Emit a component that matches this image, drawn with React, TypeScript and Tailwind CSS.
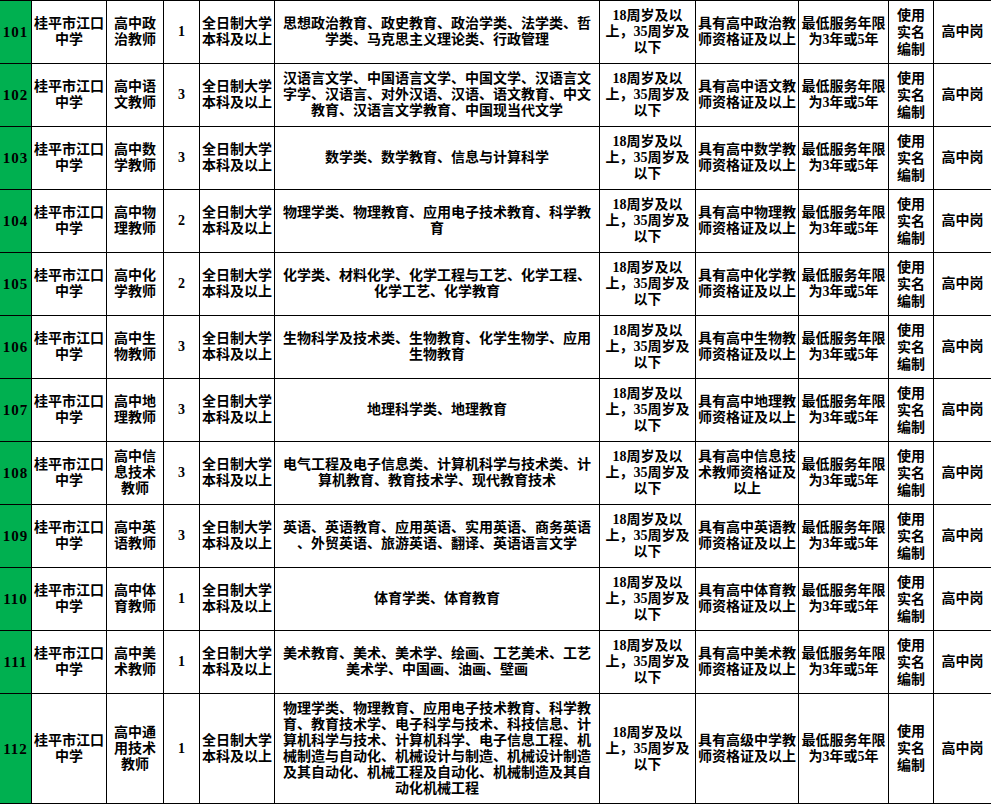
const cols = "grid-cols-[32px_75px_57px_36px_75px_325px_96px_103px_90px_45px_57px]"

type Row = {
  no: string
  post: string
  count: string
  major: string
  cert: string
}

const rows: Row[] = [
  { no: "101", post: "高中政/治教师", count: "1", major: "思想政治教育、政史教育、政治学类、法学类、哲/学类、马克思主义理论类、行政管理", cert: "具有高中政治教/师资格证及以上" },
  { no: "102", post: "高中语/文教师", count: "3", major: "汉语言文学、中国语言文学、中国文学、汉语言文/字学、汉语言、对外汉语、汉语、语文教育、中文/教育、汉语言文学教育、中国现当代文学", cert: "具有高中语文教/师资格证及以上" },
  { no: "103", post: "高中数/学教师", count: "3", major: "数学类、数学教育、信息与计算科学", cert: "具有高中数学教/师资格证及以上" },
  { no: "104", post: "高中物/理教师", count: "2", major: "物理学类、物理教育、应用电子技术教育、科学教/育", cert: "具有高中物理教/师资格证及以上" },
  { no: "105", post: "高中化/学教师", count: "2", major: "化学类、材料化学、化学工程与工艺、化学工程、/化学工艺、化学教育", cert: "具有高中化学教/师资格证及以上" },
  { no: "106", post: "高中生/物教师", count: "3", major: "生物科学及技术类、生物教育、化学生物学、应用/生物教育", cert: "具有高中生物教/师资格证及以上" },
  { no: "107", post: "高中地/理教师", count: "3", major: "地理科学类、地理教育", cert: "具有高中地理教/师资格证及以上" },
  { no: "108", post: "高中信/息技术/教师", count: "3", major: "电气工程及电子信息类、计算机科学与技术类、计/算机教育、教育技术学、现代教育技术", cert: "具有高中信息技/术教师资格证及/以上" },
  { no: "109", post: "高中英/语教师", count: "3", major: "英语、英语教育、应用英语、实用英语、商务英语/、外贸英语、旅游英语、翻译、英语语言文学", cert: "具有高中英语教/师资格证及以上" },
  { no: "110", post: "高中体/育教师", count: "1", major: "体育学类、体育教育", cert: "具有高中体育教/师资格证及以上" },
  { no: "111", post: "高中美/术教师", count: "1", major: "美术教育、美术、美术学、绘画、工艺美术、工艺/美术学、中国画、油画、壁画", cert: "具有高中美术教/师资格证及以上" },
  { no: "112", post: "高中通/用技术/教师", count: "1", major: "物理学类、物理教育、应用电子技术教育、科学教/育、教育技术学、电子科学与技术、科技信息、计/算机科学与技术、计算机科学、电子信息工程、机/械制造与自动化、机械设计与制造、机械设计制造/及其自动化、机械工程及自动化、机械制造及其自/动化机械工程", cert: "具有高级中学教/师资格证及以上" },
]

function Cell({ text, className = "" }: { text: string; className?: string }) {
  return (
    <div className={`flex flex-col items-center justify-center border-r border-b border-black text-center ${className}`}>
      {text.split("/").map((line, i) => (
        <span key={i} className="whitespace-nowrap">
          {line}
        </span>
      ))}
    </div>
  )
}

export default function App() {
  return (
    <div className="w-[991px] h-[805px] overflow-hidden bg-white">
      <div
        className={`grid ${cols} grid-rows-[repeat(11,63px)_110px] border-t border-black text-black font-bold text-[14px] leading-[16px] font-['Liberation_Serif','Noto_Sans_CJK_SC',serif]`}
      >
        {rows.map((r) => (
          <div key={r.no} className="contents">
            <div className="flex items-center justify-center border-r border-b border-black bg-[#00b050] text-[15px] tracking-[1px]">
              {r.no}
            </div>
            <Cell text="桂平市江口/中学" />
            <Cell text={r.post} />
            <Cell text={r.count} />
            <Cell text="全日制大学/本科及以上" />
            <Cell text={r.major} />
            <Cell text="18周岁及以/上，35周岁及/以下" />
            <Cell text={r.cert} />
            <Cell text="最低服务年限/为3年或5年" />
            <Cell text="使用/实名/编制" className="leading-[17px]" />
            <Cell text="高中岗" className="border-r-0" />
          </div>
        ))}
      </div>
    </div>
  )
}
